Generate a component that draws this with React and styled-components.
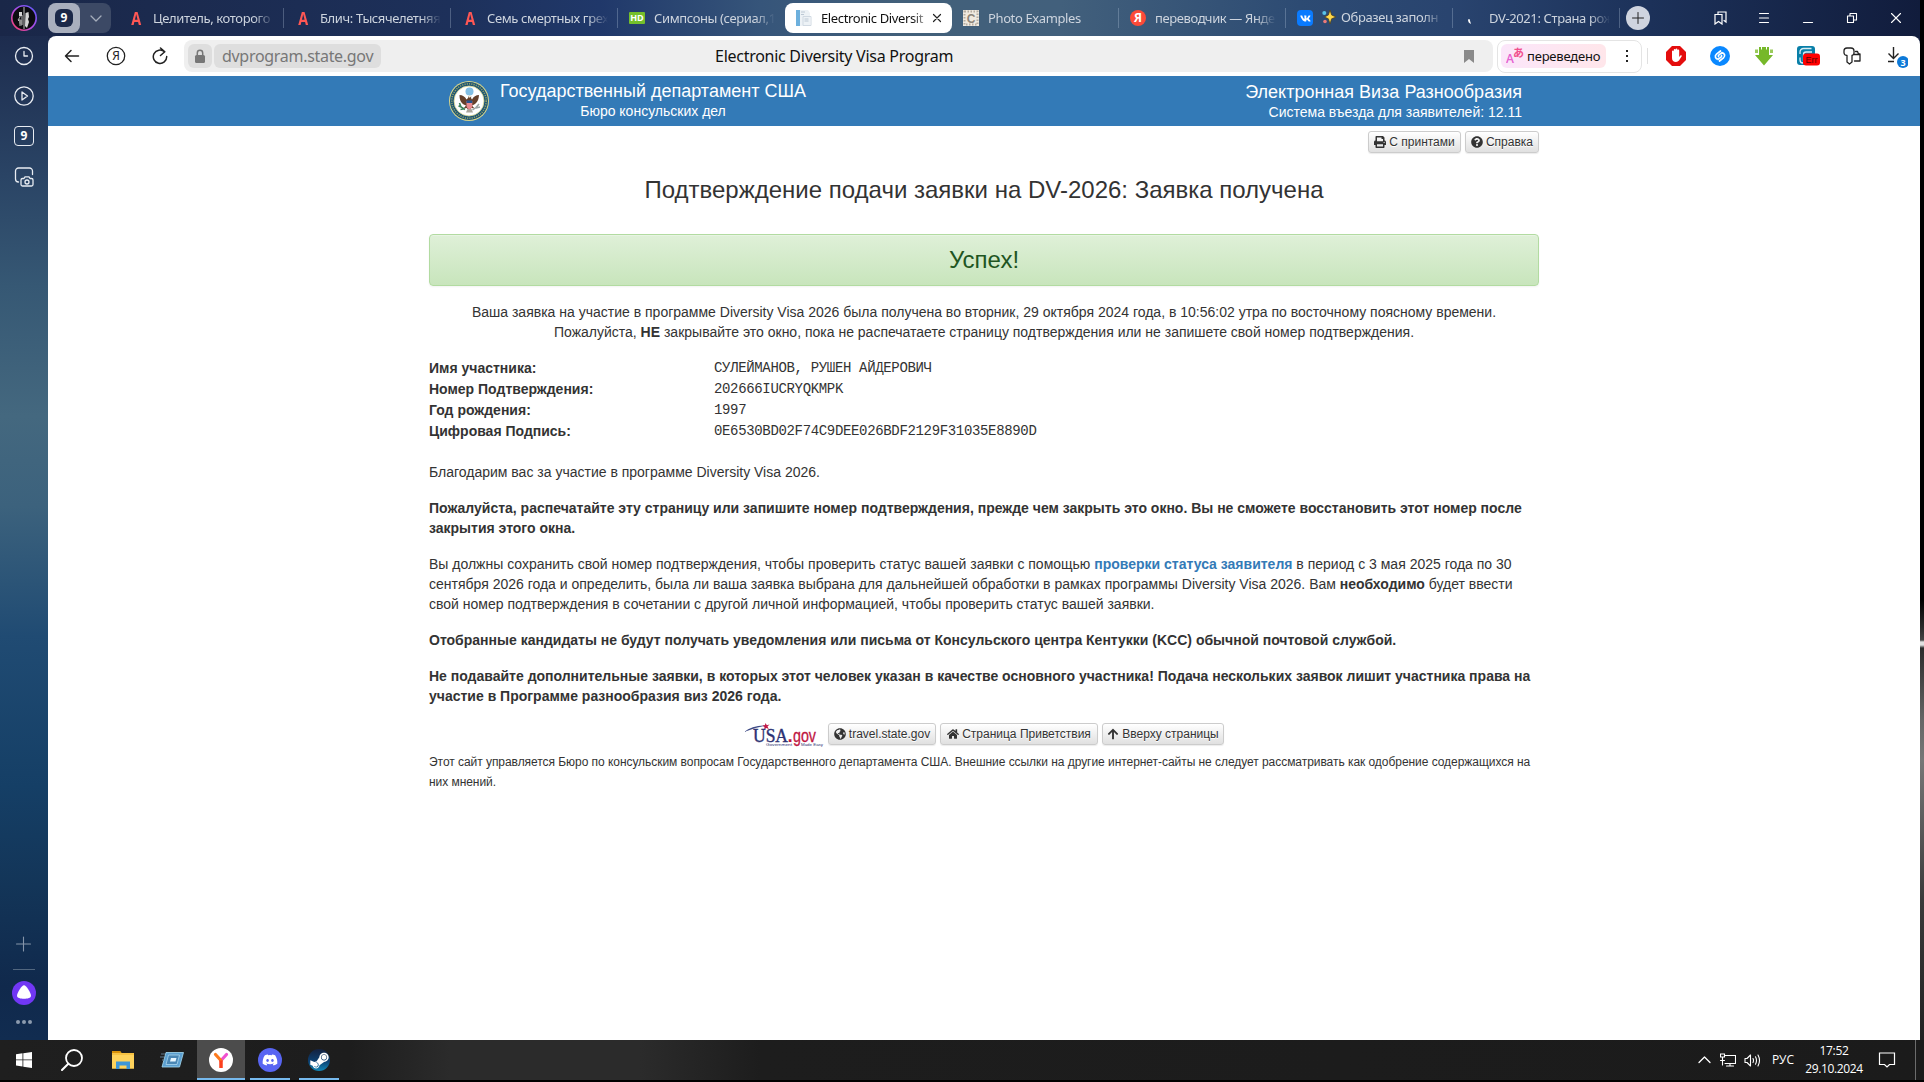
import React from 'react';
import styled, { createGlobalStyle, css } from 'styled-components';
import { FaPrint, FaQuestionCircle, FaGlobeAmericas, FaHome, FaArrowUp, FaDiscord, FaSteamSymbol, FaVk } from 'react-icons/fa';

const ui = '"Noto Sans", "Open Sans", sans-serif';
const arial = '"Liberation Sans", Arial, sans-serif';

const Global = createGlobalStyle`
  *, *::before, *::after { box-sizing: border-box; }
  html, body { margin: 0; padding: 0; background: #000; overflow: hidden; }
  svg { display: block; flex: none; }
`;

const Desktop = styled.div`
  width: 1924px;
  height: 1082px;
  display: flex;
  flex-direction: column;
  background: #000;
  font-family: ${ui};
`;

const Workspace = styled.div`
  height: 1040px;
  display: flex;
`;

const Browser = styled.div`
  width: 1920px;
  display: flex;
  flex-direction: column;
  background: linear-gradient(90deg, #1a2748 0, #1d305a 450px, #20386a 600px, #36557a 760px, #42607a 900px, #42607c 1060px, #2d4b73 1300px, #29446f 1450px, #1c3159 1650px, #111c3c 1920px);
`;

const ScreenEdge = styled.div`
  width: 4px;
  background: linear-gradient(#000 0, #000 600px, #2b2b2b 628px, #444 640px, #e0e0e0 642px, #e0e0e0 645px, #2c2c2c 648px, #666 720px, #777 760px, #3a3a3a 900px, #222 1040px);
`;

const TabStrip = styled.div`
  height: 36px;
  display: flex;
  align-items: center;
`;

const Avatar = styled.div`
  width: 48px;
  display: flex;
  justify-content: center;
`;

const TabGroup = styled.div`
  width: 63px;
  height: 30px;
  margin-right: 6px;
  border-radius: 8px;
  display: flex;
  align-items: center;
  background: #3c4965;
`;

const GroupCount = styled.div`
  width: 32px;
  height: 30px;
  border-radius: 8px;
  background: #a9afbd;
  display: flex;
  align-items: center;
  justify-content: center;
`;

const CountBadge = styled.div`
  width: 18px;
  height: 18px;
  border-radius: 6px;
  background: #1b2848;
  color: #fff;
  font-size: 12px;
  font-weight: 700;
  line-height: 17px;
  text-align: center;
`;

const GroupArrow = styled.div`
  flex: 1;
  display: flex;
  justify-content: center;
`;

const TabBox = styled.div`
  width: 167px;
  height: 30px;
  padding: 0 10px 0 10px;
  display: flex;
  align-items: center;
  border-radius: 8px;
  font-size: 13px;
  color: ${p => (p.$active ? '#111' : '#cdd4de')};
  background: ${p => (p.$active ? '#fff' : 'transparent')};
`;

const TabIcon = styled.div`
  width: 18px;
  height: 18px;
  margin-right: 8px;
  display: flex;
  align-items: center;
  justify-content: center;
  flex: none;
`;

const TabTitle = styled.div`
  flex: 1;
  min-width: 0;
  overflow: hidden;
  white-space: nowrap;
  line-height: 24px;
  letter-spacing: -0.38px;
  mask-image: linear-gradient(90deg, #000 calc(100% - 20px), transparent);
`;

const Divider = styled.div`
  width: 1px;
  height: 20px;
  margin-left: -1px;
  background: ${p => (p.$hidden ? 'transparent' : 'rgba(190,205,225,.3)')};
`;

const LetterIcon = styled.span`
  font: 700 18px "Open Sans", sans-serif;
  color: #ff5754;
  transform: scaleX(.8);
`;

const HdIcon = styled.span`
  width: 16px;
  height: 12px;
  border-radius: 1px;
  background: #74bf2b;
  color: #fff;
  font: 700 9px/12px "Open Sans", sans-serif;
  text-align: center;
`;

const YaIcon = styled.span`
  width: 16px;
  height: 16px;
  border-radius: 50%;
  background: #fc4a38;
  color: #fff;
  font: 700 12px/16px "Open Sans", sans-serif;
  text-align: center;
`;

const VkIcon = styled.span`
  width: 16px;
  height: 16px;
  border-radius: 4px;
  background: #0a7bff;
  color: #fff;
  font-size: 11px;
  display: flex;
  align-items: center;
  justify-content: center;
`;

const NewTab = styled.div`
  width: 24px;
  height: 24px;
  margin-left: 6px;
  border-radius: 50%;
  background: #cfd4df;
  display: flex;
  align-items: center;
  justify-content: center;
`;

const WindowButtons = styled.div`
  margin-left: auto;
  display: flex;
  padding-right: 2px;
`;

const Cell = styled.div`
  width: 44px;
  height: 36px;
  display: flex;
  align-items: center;
  justify-content: center;
  flex: none;
`;

const Body = styled.div`
  height: 1004px;
  display: flex;
`;

const Sidebar = styled.div`
  width: 48px;
  display: flex;
  flex-direction: column;
  align-items: center;
  background: linear-gradient(#1d2c4e 0, #2a4465 140px, #365874 250px, #44687f 380px, #3c627d 470px, #204b73 600px, #153f66 750px, #133558 850px, #10294c 950px, #112c50 1004px);
`;

const SideCell = styled.div`
  width: 48px;
  height: ${p => p.$h || 40}px;
  display: flex;
  align-items: center;
  justify-content: center;
`;

const TabsCounter = styled.div`
  width: 20px;
  height: 20px;
  border: 1.5px solid #e8ecf2;
  border-radius: 4px;
  color: #fff;
  font-size: 12px;
  font-weight: 700;
  line-height: 17px;
  text-align: center;
`;

const SideSpacer = styled.div`
  flex: 1;
`;

const SideRule = styled.div`
  width: 22px;
  height: 1px;
  background: #52677f;
`;

const Dots = styled.div`
  display: flex;
  gap: 2px;
  span { width: 4px; height: 4px; border-radius: 50%; background: #8c9bae; }
`;

const Window = styled.div`
  width: 1872px;
  background: #fff;
  border-radius: 8px 8px 0 0;
  overflow: hidden;
`;

const Toolbar = styled.div`
  height: 40px;
  display: flex;
  align-items: center;
  padding: 0 2px;
`;

const AddressBar = styled.div`
  width: 1309px;
  height: 32px;
  margin-left: 2px;
  padding: 0 4px;
  border-radius: 8px;
  background: #efefef;
  display: flex;
  align-items: center;
`;

const LockBox = styled.div`
  width: 24px;
  height: 24px;
  margin-right: 2px;
  border-radius: 6px;
  background: #dedede;
  display: flex;
  align-items: center;
  justify-content: center;
`;

const Domain = styled.div`
  width: 167px;
  height: 24px;
  padding-left: 8px;
  border-radius: 6px;
  background: #dedede;
  color: #777;
  font-size: 16px;
  line-height: 24px;
  letter-spacing: -0.3px;
`;

const PageTitle = styled.div`
  flex: 1;
  padding-left: 334px;
  color: #111;
  font-size: 16px;
  line-height: 24px;
  letter-spacing: -0.27px;
`;

const BookmarkSlot = styled.div`
  width: 40px;
  display: flex;
  justify-content: center;
`;

const TranslateBox = styled.div`
  width: 145px;
  height: 33px;
  margin-left: 4px;
  padding-left: 3px;
  border: 1px solid #e4e4e4;
  border-radius: 8px;
  display: flex;
  align-items: center;
`;

const TranslateChip = styled.div`
  width: 105px;
  height: 24px;
  padding-left: 5px;
  border-radius: 6px;
  background: linear-gradient(90deg, #fbe6fa, #ffe6ea);
  display: flex;
  align-items: center;
  gap: 3px;
  font-size: 13px;
  letter-spacing: -0.2px;
  color: #111;
`;

const Kebab = styled.div`
  flex: 1;
  padding-left: 7px;
  display: flex;
  flex-direction: column;
  align-items: center;
  gap: 3px;
  span { width: 2px; height: 2px; background: #222; }
`;

const ToolRule = styled.div`
  width: 1px;
  height: 16px;
  margin: 0 6px 0 5px;
  background: #e0e0e0;
`;

const SiteHeader = styled.div`
  height: 50px;
  padding: 0 398px 0 401px;
  background: #337ab7;
  color: #fff;
  display: flex;
  align-items: center;
  font-family: ${arial};
`;

const Dept = styled.div`
  margin-left: 11px;
  margin-top: -1px;
  text-align: center;
`;

const Program = styled.div`
  margin-left: auto;
  margin-top: 2px;
  text-align: right;
`;

const HeadLine = styled.div`
  font-size: 18px;
  line-height: 20px;
  white-space: nowrap;
`;

const SubLine = styled.div`
  font-size: 14px;
  line-height: 20px;
  white-space: nowrap;
`;

const Page = styled.div`
  width: 1110px;
  margin-left: 381px;
  padding-top: 5px;
  color: #333;
  font: 14px/20px ${arial};
`;

const ButtonRow = styled.div`
  display: flex;
  gap: 4px;
  justify-content: ${p => (p.$center ? 'center' : 'flex-end')};
`;

const FooterRow = styled(ButtonRow)`
  padding-top: 1px;
`;

const SmallButton = styled.div`
  width: ${p => p.$w}px;
  height: 22px;
  border: 1px solid #ccc;
  border-radius: 3px;
  background: linear-gradient(#fff, #e0e0e0);
  box-shadow: 0 1px 1px rgba(0,0,0,.08);
  text-shadow: 0 1px 0 #fff;
  font-size: 12px;
  line-height: 18px;
  display: flex;
  align-items: center;
  justify-content: center;
  gap: 3px;
  white-space: nowrap;
`;

const Heading = styled.h1`
  margin: 23px 0 30px;
  font-size: 24px;
  font-weight: 400;
  line-height: 28px;
  text-align: center;
`;

const Alert = styled.div`
  height: 52px;
  margin-bottom: 16px;
  border: 1px solid #b2dba1;
  border-radius: 4px;
  background: linear-gradient(#dff0d8, #c8e5bc);
  box-shadow: inset 0 1px 0 rgba(255,255,255,.25), 0 1px 2px rgba(0,0,0,.05);
  color: #1f5522;
  font-size: 24px;
  line-height: 50px;
  text-align: center;
`;

const Text = styled.p`
  margin: 0 0 16px;
  white-space: nowrap;
  text-align: ${p => (p.$center ? 'center' : 'left')};
  ${p => p.$bold && css`font-weight: 700;`}
`;

const Details = styled.dl`
  margin: 0 0 20px;
  display: grid;
  grid-template-columns: 285px 1fr;
  grid-auto-rows: 21px;
`;

const Term = styled.dt`
  font-weight: 700;
  line-height: 21px;
`;

const Value = styled.dd`
  margin: 0;
  font: 14px/21px "Liberation Mono", monospace;
  letter-spacing: -0.34px;
`;

const StatusLink = styled.a`
  color: #337ab7;
  font-weight: 700;
`;

const Disclaimer = styled.p`
  margin: 5px 0 0;
  font-size: 12px;
  line-height: 20px;
  letter-spacing: -0.049px;
  white-space: nowrap;
`;

const Taskbar = styled.div`
  height: 40px;
  display: flex;
  background: linear-gradient(90deg, #1f1f1f 0, #1d1d1d 350px, #2b2b2b 450px, #2b2b2b 640px, #1d1d1d 760px, #1b1b1b 100%);
  color: #fff;
`;

const TaskItem = styled.div`
  width: ${p => p.$w || 49}px;
  display: flex;
  align-items: center;
  justify-content: center;
  background: ${p => (p.$active ? '#4c4c4c' : 'transparent')};
  border-bottom: ${p => (p.$active ? '2px solid #76b9ed' : '0')};
  padding-top: ${p => (p.$active ? '2px' : '0')};
  padding-right: ${p => p.$shift || 0}px;
`;

const RunningItem = styled.div`
  width: 40px;
  margin: 0 0 0 ${p => p.$ml}px;
  padding-top: 2px;
  border-bottom: 2px solid #76b9ed;
  display: flex;
  align-items: center;
  justify-content: center;
`;

const RoundIcon = styled.div`
  width: ${p => p.$size}px;
  height: ${p => p.$size}px;
  border-radius: 50%;
  background: ${p => p.$bg};
  color: #fff;
  font-size: ${p => p.$font || 16}px;
  display: flex;
  align-items: center;
  justify-content: center;
`;

const Tray = styled.div`
  margin-left: auto;
  display: flex;
  align-items: center;
  font: 12px/18px "Open Sans", sans-serif;
`;

const TrayCell = styled.div`
  width: ${p => p.$w}px;
  padding-right: ${p => p.$shift || 0}px;
  display: flex;
  justify-content: center;
  text-align: center;
`;

const Clock = styled.div`
  width: 66px;
  text-align: center;
  letter-spacing: -0.35px;
`;

const ShowDesktop = styled.div`
  width: 9px;
  height: 40px;
  border-left: 1px solid #6c6c6c;
`;

const Line = ({ size = 20, w = 1.5, color = '#222', children, box }) => (
  <svg width={size} height={size} viewBox={box || `0 0 ${size} ${size}`} fill="none" stroke={color} strokeWidth={w} strokeLinecap="round" strokeLinejoin="round">{children}</svg>
);

const Seal = () => (
  <svg width="40" height="40" viewBox="0 0 40 40">
    <circle cx="20" cy="20" r="20" fill="#d9d68a" />
    <circle cx="20" cy="20" r="19" fill="#1c5475" />
    <circle cx="20" cy="20" r="17.2" fill="none" stroke="#8fa06b" strokeWidth="1.6" strokeDasharray="1.2 1.1" />
    <circle cx="20" cy="20" r="15" fill="#fff" stroke="#d9d68a" strokeWidth=".8" />
    <circle cx="20.5" cy="10.5" r="4" fill="#83bfe4" />
    <path d="M10.500 14c3 0 5.500 1.500 7 4.500l1.500-1.500v-1.500l1.500-1 1.800 1-.3 1.500 1 1.500c1.500-3 4-4.500 7-4.500-.2 3-.8 5.500-2.500 7.500s-3 2.500-4.500 3l2.500 3-3-.5-2.500 2-2.500-2-3 .5 2.500-3c-1.500-.5-3-1-4.500-3s-2-4.500-2-7.500z" fill="#65402b" />
    <path d="M19.300 14.800l1.700-.6 1.200 1.200-1.200 1.200h-1.500z" fill="#f3f0df" />
    <path d="M10.500 22l1.500 4 4 2.500M9.500 25l3 1M11.500 28.500l3.500-.8" stroke="#3c8259" strokeWidth="1.600" fill="none" />
    <path d="M30 23l-3 3.500-3.500 2.500M31 26l-4 1" stroke="#9aa3a3" strokeWidth="1.500" fill="none" />
    <path d="M18.500 28l-1.500 3.500h7l-1.500-3.500z" fill="#aaa69c" />
    <path d="M17.500 20h5.800v5c0 2-2 3-2.900 3.500-.9-.5-2.900-1.500-2.900-3.500z" fill="#e9898f" />
    <path d="M17.500 19.500h5.800v2.600h-5.800z" fill="#28548f" />
  </svg>
);

const UsaGov = () => (
  <svg width="80" height="24" viewBox="0 0 80 24">
    <path d="M0 9Q9 2 24 2.500Q12 4 0 9z" fill="#3d4a86" />
    <path d="M21.500 0l1.300 2.200 2.700-.6-2 2 1.300 2.400-2.600-1-2 1.700.3-2.800-2.100-1.500 2.500-.2z" fill="#c41846" />
    <text x="9" y="18.500" fontFamily="Liberation Serif" fontSize="19" fill="#2c3173" stroke="#2c3173" strokeWidth=".4" textLength="35" lengthAdjust="spacingAndGlyphs">USA</text>
    <text x="43.500" y="18.500" fontFamily="Liberation Sans" fontWeight="700" fontSize="19" fill="#c0143f">.</text>
    <text x="49" y="18.500" fontFamily="Liberation Sans" fontSize="18" fill="#c0143f" stroke="#c0143f" strokeWidth=".3" textLength="23" lengthAdjust="spacingAndGlyphs">gov</text>
    <text x="22" y="22.500" fontFamily="Liberation Sans" fontSize="4" fill="#2c3173" textLength="26" lengthAdjust="spacingAndGlyphs">Government</text>
    <text x="57" y="22.500" fontFamily="Liberation Sans" fontSize="4" fill="#2c3173" textLength="22" lengthAdjust="spacingAndGlyphs">Made Easy</text>
  </svg>
);

const DocIcon = () => (
  <svg width="16" height="16" viewBox="0 0 16 16">
    <path d="M0 0h4v16H0z" fill="#6db0dd" />
    <path d="M4 0h8l2 3v13H4z" fill="#edf2f6" />
    <path d="M5 2h4M5 4.500h3M8.500 9h4M8.500 11h4" stroke="#bcc8d4" strokeWidth="1" />
    <path d="M7 6.500h8v9H7z" fill="none" stroke="#d0d9e2" />
  </svg>
);

const PhotoIcon = () => (
  <svg width="16" height="16" viewBox="0 0 16 16">
    <rect width="16" height="16" fill="#efe9df" />
    <rect x="1.500" y="1.500" width="13" height="13" fill="none" stroke="#b5aca0" strokeWidth="2" strokeDasharray="1.500 1.500" />
    <text x="8" y="12.500" fontFamily="Liberation Sans" fontSize="12" fontWeight="700" textAnchor="middle" fill="#8d857a">C</text>
  </svg>
);

const SparkIcon = () => (
  <svg width="14" height="14" viewBox="0 0 14 14">
    <path d="M8 0l1.600 5L14 7 9.600 8.800 8 14 6.400 8.800 2.500 7l3.900-2z" fill="#ffd84a" stroke="#4b3d1a" strokeWidth=".7" />
    <circle cx="2.300" cy="3" r="2" fill="#58c3e8" />
    <circle cx="3" cy="11.500" r="1.800" fill="#ec7a78" />
  </svg>
);

const Loading = () => (
  <svg width="16" height="16" viewBox="0 0 16 16"><path d="M4 9.500Q4 13 7 14L5.500 9z" fill="#fff" /></svg>
);

const AvatarIcon = () => (
  <svg width="26" height="26" viewBox="0 0 26 26">
    <defs>
      <linearGradient id="ring" x1="0" x2="1" y1="1" y2="0">
        <stop offset="0" stopColor="#ff4060" /><stop offset=".45" stopColor="#b44be0" /><stop offset="1" stopColor="#5a5cff" />
      </linearGradient>
    </defs>
    <circle cx="13" cy="13" r="12.200" fill="#0c0c10" stroke="url(#ring)" strokeWidth="1.600" />
    <path d="M9 8v4l-2 3 2 2v4M13 2v22M11 10v10" stroke="#bbb" strokeWidth="1" fill="none" />
    <path d="M14.500 8l3-1 .5 5-1 2 1 3-2 6-2-2zM8 7h3v4H8z" fill="#d5d5d5" />
    <path d="M8 14l3 1v6l-3-3z" fill="#8d8d8d" />
  </svg>
);

const tabs = [
  { icon: <LetterIcon>A</LetterIcon>, title: 'Целитель, которого' },
  { icon: <LetterIcon>A</LetterIcon>, title: 'Блич: Тысячелетняя' },
  { icon: <LetterIcon>A</LetterIcon>, title: 'Семь смертных грех' },
  { icon: <HdIcon>HD</HdIcon>, title: 'Симпсоны (сериал,1', noRule: true },
  { icon: <DocIcon />, title: 'Electronic Diversit', active: true, noRule: true },
  { icon: <PhotoIcon />, title: 'Photo Examples' },
  { icon: <YaIcon>Я</YaIcon>, title: 'переводчик — Янде' },
  { icon: <VkIcon><FaVk /></VkIcon>, title: 'Образец заполн', spark: true },
  { icon: <Loading />, title: 'DV-2021: Страна рож' },
];

const details = [
  ['Имя участника:', 'СУЛЕЙМАНОВ, РУШЕН АЙДЕРОВИЧ'],
  ['Номер Подтверждения:', '202666IUCRYQKMPK'],
  ['Год рождения:', '1997'],
  ['Цифровая Подпись:', '0E6530BD02F74C9DEE026BDF2129F31035E8890D'],
];

const SparkTitle = styled.span`
  display: inline-flex;
  align-items: center;
  gap: 5px;
`;

function Tabs() {
  return (
    <TabStrip>
      <Avatar><AvatarIcon /></Avatar>
      <TabGroup>
        <GroupCount><CountBadge>9</CountBadge></GroupCount>
        <GroupArrow><Line size={12} w={1.3} color="#a5adbb"><path d="M1 4l5 5 5-5" /></Line></GroupArrow>
      </TabGroup>
      {tabs.map(t => (
        <React.Fragment key={t.title}>
          <TabBox $active={t.active}>
            <TabIcon>{t.icon}</TabIcon>
            <TabTitle>{t.spark ? <SparkTitle><SparkIcon />{t.title}</SparkTitle> : t.title}</TabTitle>
            {t.active && <Line size={10} w={1.2} color="#222"><path d="M1.500 1.500l7 7M8.500 1.500l-7 7" /></Line>}
          </TabBox>
          <Divider $hidden={t.noRule} />
        </React.Fragment>
      ))}
      <NewTab><Line size={12} w={1} color="#222"><path d="M6 .5v11M.5 6h11" /></Line></NewTab>
      <WindowButtons>
        <Cell><Line size={14} w={1.2} color="#fff"><path d="M5 2.500V1h8v10l-2-1.500M2 3.500h7v9.500L5.500 10.500 2 13z" strokeLinejoin="miter" /></Line></Cell>
        <Cell><Line size={12} w={1.1} color="#fff"><path d="M1.500 1.500h9M1.500 6h9M1.500 10.500h9" /></Line></Cell>
        <Cell><Line size={12} w={1.2} color="#fff"><path d="M1.500 10.500h9" /></Line></Cell>
        <Cell><Line size={12} w={1.1} color="#fff"><path d="M1.500 4h6v6.500h-6zM4 4V1.500h6.500V8h-3" /></Line></Cell>
        <Cell><Line size={12} w={1.1} color="#fff"><path d="M1.500 1.500l9 9M10.500 1.500l-9 9" /></Line></Cell>
      </WindowButtons>
    </TabStrip>
  );
}

function SideRail() {
  const c = '#e8ecf2';
  return (
    <Sidebar>
      <SideCell><Line color={c} w={1.3}><circle cx="10" cy="10" r="8.500" /><path d="M10 5.500V10h3.500" /></Line></SideCell>
      <SideCell><Line color={c} w={1.3}><circle cx="10" cy="10" r="9.200" /><path d="M8 6l5.500 4L8 14z" /></Line></SideCell>
      <SideCell><TabsCounter>9</TabsCounter></SideCell>
      <SideCell $h={41}><Line color={c} w={1.3}><path d="M18.500 7.500V4a3 3 0 0 0-3-3h-11a3 3 0 0 0-3 3v8a3 3 0 0 0 3 3M8.500 11.500h1.500l1-1.700h4l1 1.700h1.500a1.500 1.500 0 0 1 1.500 1.500v4.500a1.500 1.500 0 0 1-1.500 1.500h-9a1.500 1.500 0 0 1-1.500-1.500V13a1.500 1.500 0 0 1 1.500-1.500z" /><circle cx="13" cy="15" r="2" /></Line></SideCell>
      <SideSpacer />
      <SideCell $h={50}><Line size={16} w={1.1} color="#8595a9"><path d="M7.500 1v14M.5 8h14" /></Line></SideCell>
      <SideRule />
      <SideCell $h={46}>
        <svg width="24" height="24" viewBox="0 0 24 24"><circle cx="12" cy="12" r="12" fill="#7137f5" /><path d="M12 4.200c2.300 0 7 7.800 7 10.500 0 2.300-3.500 3-7 3s-7-.7-7-3C5 12 9.700 4.200 12 4.200z" fill="#fff" /></svg>
      </SideCell>
      <SideCell $h={12}><Dots><span /><span /><span /></Dots></SideCell>
      <SideCell $h={12} />
    </Sidebar>
  );
}

function NavBar() {
  return (
    <Toolbar>
      <Cell><Line size={16} w={1.5}><path d="M14.500 8H1.500M7 2.500L1.500 8 7 13.500" /></Line></Cell>
      <Cell>
        <svg width="20" height="20" viewBox="0 0 20 20"><circle cx="10" cy="10" r="8.700" fill="none" stroke="#222" strokeWidth="1.300" /><text x="10" y="14.300" fontSize="12" fontFamily="Noto Sans" textAnchor="middle" fill="#222">Я</text></svg>
      </Cell>
      <Cell><Line size={18} w={1.5}><path d="M13.500 4.800a6.700 6.700 0 1 0 2.200 4.700M9.500 1l4.300 3.800-4.300 3.700" /></Line></Cell>
      <AddressBar>
        <LockBox><svg width="12" height="14" viewBox="0 0 12 14"><rect x="1" y="6" width="10" height="8" rx="1.500" fill="#777" /><path d="M3.300 6V4a2.700 2.700 0 0 1 5.400 0v2" fill="none" stroke="#777" strokeWidth="1.500" /></svg></LockBox>
        <Domain>dvprogram.state.gov</Domain>
        <PageTitle>Electronic Diversity Visa Program</PageTitle>
        <BookmarkSlot><svg width="10" height="13" viewBox="0 0 10 13"><path d="M0 0h10v13L5 9l-5 4z" fill="#8a8a8a" /></svg></BookmarkSlot>
      </AddressBar>
      <TranslateBox>
        <TranslateChip>
          <svg width="18" height="18" viewBox="0 0 18 18"><text x="0" y="16" fontFamily="Open Sans" fontSize="12" fontWeight="600" fill="#e55fd0">A</text><text x="7" y="10" fontFamily="Noto Sans CJK JP" fontSize="11" fontWeight="700" fill="#f0508d">あ</text></svg>
          переведено
        </TranslateChip>
        <Kebab><span /><span /><span /></Kebab>
      </TranslateBox>
      <ToolRule />
      <Cell>
        <svg width="20" height="20" viewBox="0 0 20 20"><path d="M6 0h8l6 6v8l-6 6H6l-6-6V6z" fill="#e40d0d" /><path d="M6 10V5.500a.9.900 0 0 1 1.800 0V3.800a.9.900 0 0 1 1.800 0v-.3a.9.900 0 0 1 1.800 0v1a.9.900 0 0 1 1.800 0V11l1.200-1.500c.8-.8 1.800 0 1.200.9L13 14.500a4 4 0 0 1-3 1.500c-2.500 0-4-1.500-4-4z" fill="#fff" /></svg>
      </Cell>
      <Cell>
        <svg width="20" height="20" viewBox="0 0 20 20"><circle cx="10" cy="10" r="10" fill="#0a88ff" /><path d="M8.200 13.200C5.500 13.200 4.300 10 6.500 8.200L10.500 5M8.500 10.500c-.3-.6 0-1.200.5-1.600l3-2.300M11.800 6.800c2.700 0 3.900 3.200 1.700 5L9.500 15M11.500 9.500c.3.600 0 1.200-.5 1.600l-3 2.300" fill="none" stroke="#fff" strokeWidth="1.700" strokeLinecap="round" /></svg>
      </Cell>
      <Cell>
        <svg width="20" height="20" viewBox="0 0 20 20"><path d="M5 1h10v8h4L10 19.500 1 9h4z" fill="#76b82a" /><path d="M1 3.500h3V7H1zM16 3.500h3V7h-3z" fill="#9acb5c" /><path d="M7.500 0v3.500M12.500 0v3.500" stroke="#fff" strokeWidth="1" /></svg>
      </Cell>
      <Cell>
        <svg width="24" height="22" viewBox="-1 0 24 22"><rect x="0" y="1" width="18" height="19" rx="3" fill="#087fa8" /><path d="M3 9V7a3.500 3.500 0 0 1 3.500-3.500h8M3 12.500V15a3 3 0 0 0 3 3M6.500 16V9.500a2.500 2.500 0 0 1 2.500-2.500h6" fill="none" stroke="#d9eef5" strokeWidth="1.300" /><rect x="6" y="8.500" width="17" height="12" rx="3" fill="#f00" /><text x="14.500" y="17.800" textAnchor="middle" fontSize="9" fontFamily="Liberation Sans" fill="#5a0000">Err</text></svg>
      </Cell>
      <Cell><Line size={18} w={1.3}><path d="M1 4a3 3 0 0 1 3-3h4a3 3 0 0 1 3 3v2a2.500 2.500 0 0 1-2 2.500V15l-2.500 2L4 15V8.500A3 3 0 0 1 1 6zM12.500 4.500h2l1 2.500H17v7H11.500M11.500 7.500h5" /></Line></Cell>
      <Cell>
        <svg width="24" height="26" viewBox="-2 -3 24 26"><path d="M7.500 1v11M2.500 7.500l5 5 5-5M2 15.500h6" fill="none" stroke="#222" strokeWidth="1.400" /><circle cx="17" cy="16" r="6" fill="#0d79d8" /><text x="17" y="19.500" textAnchor="middle" fontSize="9" fontWeight="700" fontFamily="Noto Sans" fill="#fff">3</text></svg>
      </Cell>
    </Toolbar>
  );
}

function VisaPage() {
  return (
    <>
      <SiteHeader>
        <Seal />
        <Dept>
          <HeadLine>Государственный департамент США</HeadLine>
          <SubLine>Бюро консульских дел</SubLine>
        </Dept>
        <Program>
          <HeadLine>Электронная Виза Разнообразия</HeadLine>
          <SubLine>Система въезда для заявителей: 12.11</SubLine>
        </Program>
      </SiteHeader>
      <Page>
        <ButtonRow>
          <SmallButton $w={93}><FaPrint />С принтами</SmallButton>
          <SmallButton $w={74}><FaQuestionCircle />Справка</SmallButton>
        </ButtonRow>
        <Heading>Подтверждение подачи заявки на DV-2026: Заявка получена</Heading>
        <Alert>Успех!</Alert>
        <Text $center>
          Ваша заявка на участие в программе Diversity Visa 2026 была получена во вторник, 29 октября 2024 года, в 10:56:02 утра по восточному поясному времени.<br />
          Пожалуйста, <b>НЕ</b> закрывайте это окно, пока не распечатаете страницу подтверждения или не запишете свой номер подтверждения.
        </Text>
        <Details>
          {details.map(([k, v]) => (
            <React.Fragment key={k}><Term>{k}</Term><Value>{v}</Value></React.Fragment>
          ))}
        </Details>
        <Text>Благодарим вас за участие в программе Diversity Visa 2026.</Text>
        <Text $bold>
          Пожалуйста, распечатайте эту страницу или запишите номер подтверждения, прежде чем закрыть это окно. Вы не сможете восстановить этот номер после<br />закрытия этого окна.
        </Text>
        <Text>
          Вы должны сохранить свой номер подтверждения, чтобы проверить статус вашей заявки с помощью <StatusLink>проверки статуса заявителя</StatusLink> в период с 3 мая 2025 года по 30<br />
          сентября 2026 года и определить, была ли ваша заявка выбрана для дальнейшей обработки в рамках программы Diversity Visa 2026. Вам <b>необходимо</b> будет ввести<br />
          свой номер подтверждения в сочетании с другой личной информацией, чтобы проверить статус вашей заявки.
        </Text>
        <Text $bold>Отобранные кандидаты не будут получать уведомления или письма от Консульского центра Кентукки (KCC) обычной почтовой службой.</Text>
        <Text $bold>
          Не подавайте дополнительные заявки, в которых этот человек указан в качестве основного участника! Подача нескольких заявок лишит участника права на<br />участие в Программе разнообразия виз 2026 года.
        </Text>
        <FooterRow $center>
          <UsaGov />
          <SmallButton $w={108}><FaGlobeAmericas />travel.state.gov</SmallButton>
          <SmallButton $w={158}><FaHome />Страница Приветствия</SmallButton>
          <SmallButton $w={122}><FaArrowUp />Вверху страницы</SmallButton>
        </FooterRow>
        <Disclaimer>
          Этот сайт управляется Бюро по консульским вопросам Государственного департамента США. Внешние ссылки на другие интернет-сайты не следует рассматривать как одобрение содержащихся на<br />них мнений.
        </Disclaimer>
      </Page>
    </>
  );
}

function WindowsTaskbar() {
  return (
    <Taskbar>
      <TaskItem $w={48}><svg width="16" height="16" viewBox="0 0 16 16"><path d="M0 2.300L6.500 1.300V7.500H0zM7.300 1.200L16 0v7.500H7.300zM0 8.300h6.500v6.200L0 13.600zM7.300 8.300H16V16l-8.700-1.200z" fill="#fff" /></svg></TaskItem>
      <TaskItem $shift={2}><Line size={22} w={1.8} color="#fff"><circle cx="13" cy="9" r="8" /><path d="M7.300 14.700L1 21" strokeWidth="2" /></Line></TaskItem>
      <TaskItem $w={51}>
        <svg width="22" height="18" viewBox="0 0 22 18"><path d="M0 0h8l1.500 2H22v15.500H0z" fill="#f7c242" /><path d="M0 0h8l1.500 2H0z" fill="#d9920a" /><path d="M0 4h22v13.500H0z" fill="#ffd35c" /><path d="M4 18v-7.500h14V18h-3.500v-3.500h-7V18z" fill="#3e97d8" /></svg>
      </TaskItem>
      <TaskItem $shift={2}>
        <svg width="24" height="18" viewBox="0 0 24 18"><path d="M6 1.500h17.500L19.500 16H2z" fill="#5b9fd0" stroke="#a6dcf4" strokeWidth=".8" /><path d="M8.500 4h11L17 13.500H6z" fill="#4a87b5" stroke="#a9d6ee" strokeWidth=".8" /><path d="M11 7h5.500l-1 3.500H10z" fill="#e6f6ff" /><path d="M1 3h4M0 6h4M2 9h2" stroke="#60798b" /></svg>
      </TaskItem>
      <TaskItem $w={48} $active>
        <RoundIcon $size={24} $bg="#fff">
          <svg width="16" height="18" viewBox="0 0 16 18"><path d="M8 9.500l5.500-6" stroke="#ef50cf" strokeWidth="3.200" strokeLinecap="round" /><path d="M2.500 3.500L8 9.500" stroke="#fd7a1c" strokeWidth="3.200" strokeLinecap="round" /><path d="M8 9.500V17" stroke="#fc3f1d" strokeWidth="3.500" /></svg>
        </RoundIcon>
      </TaskItem>
      <RunningItem $ml={5}><RoundIcon $size={24} $bg="#5865f2"><FaDiscord /></RoundIcon></RunningItem>
      <RunningItem $ml={9}><RoundIcon $size={22} $bg="linear-gradient(#14213f,#0c3f70 55%,#1187b8)" $font={21}><FaSteamSymbol /></RoundIcon></RunningItem>
      <Tray>
        <TrayCell $w={24}><Line size={14} w={1.3} color="#fff"><path d="M2 9.500l5.500-5.500L13 9.500" /></Line></TrayCell>
        <TrayCell $w={24}><Line size={16} w={1.1} color="#fff"><path d="M5 3.500h10.500v8H5M10 11.500V14M6.500 14h7M.5 2h4v3h-4zM2.500 5v8M.5 8.500h4" strokeLinejoin="miter" /></Line></TrayCell>
        <TrayCell $w={25}><Line size={17} w={1.1} color="#fff"><path d="M1 6.500h2l3.500-3.500v11L3 10.500H1zM9 6.500q1 2 0 4M11.500 4.800q2 3.700 0 7.400M14 3q3 5.500 0 11" /></Line></TrayCell>
        <TrayCell $w={36}>РУС</TrayCell>
        <Clock>17:52<br />29.10.2024</Clock>
        <TrayCell $w={48} $shift={8}><Line size={18} w={1.2} color="#fff"><path d="M1.500 2h15v11.500h-5L9 16l-2.500-2.500h-5z" strokeLinejoin="miter" /></Line></TrayCell>
        <ShowDesktop />
      </Tray>
    </Taskbar>
  );
}

export default function App() {
  return (
    <>
      <Global />
      <Desktop>
        <Workspace>
          <Browser>
            <Tabs />
            <Body>
              <SideRail />
              <Window>
                <NavBar />
                <VisaPage />
              </Window>
            </Body>
          </Browser>
          <ScreenEdge />
        </Workspace>
        <WindowsTaskbar />
      </Desktop>
    </>
  );
}
